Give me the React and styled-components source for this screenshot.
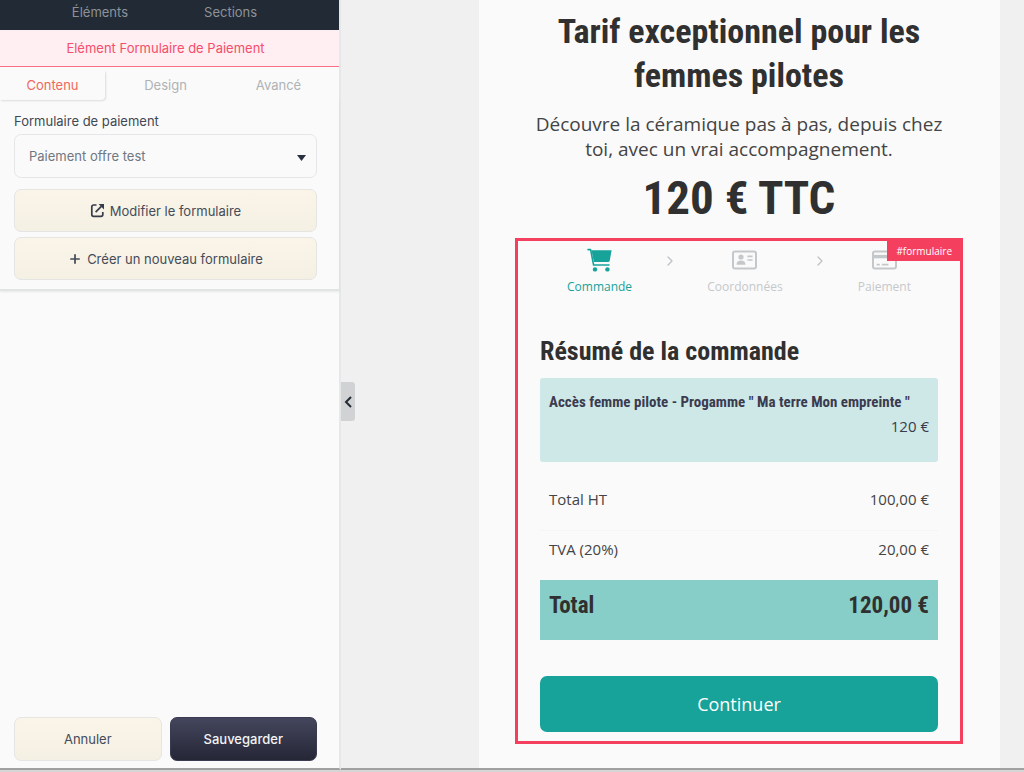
import React, { useState } from "react";
import styled, { createGlobalStyle } from "styled-components";
import { ChevronRight, Plus } from "lucide-react";

const GlobalStyle = createGlobalStyle`
  * {
    box-sizing: border-box;
  }
  body {
    margin: 0;
    background: #f0f0f0;
    font-family: Inter, sans-serif;
    font-size: 13px;
  }
  button, select {
    font-family: inherit;
    font-size: inherit;
  }
`

const titleFont = '"Liberation Sans Narrow", "Roboto Condensed", "Liberation Sans", sans-serif'

const EditorContainer = styled.div`
  display: flex;
  min-height: 100vh;
  border-bottom: 2px solid #d6d6d6;
`
const Sidebar = styled.aside`
  display: flex;
  flex-direction: column;
  flex: 0 0 341px;
  background: #fafafa;
  border-right: 2px solid #e5e8e8;
  border-bottom: 2px solid #a0a0a0;
`
const TopNav = styled.nav`
  display: flex;
  justify-content: center;
  gap: 76px;
  height: 30px;
  padding: 0 10px 6px 0;
  background: #222b35;
`
const TopLink = styled.a`
  color: #8d9299;
  line-height: 24px;
  text-decoration: none;
`
const Banner = styled.h1`
  margin: 0;
  padding-right: 8px;
  background: #ffeff2;
  border-bottom: 1px solid #fb6f88;
  color: #f64d6b;
  font-size: 13px;
  font-weight: 400;
  line-height: 36px;
  text-align: center;
`
const Tabs = styled.div`
  display: flex;
  gap: 8px;
  padding: 4px 8px 0 0;
`
const Tab = styled.button`
  flex: 1;
  height: 29px;
  padding: 0 0 2px;
  border: 0;
  border-radius: 0 0 4px 0;
  background: transparent;
  color: ${props => props.$active ? "#f0685c" : "#afb2b5"};
  box-shadow: ${props => props.$active ? "1px 1px 2px rgba(0, 0, 0, 0.12)" : "none"};
`
const Settings = styled.section`
  display: flex;
  flex-direction: column;
  padding: 11px 22px 9px 14px;
  border-bottom: 2px solid #e2e3e3;
  box-shadow: 0 1px 2px rgba(0, 0, 0, 0.08);
`
const FieldLabel = styled.label`
  color: #3f4853;
  line-height: 20px;
`
const SelectWrapper = styled.div`
  position: relative;
  margin: 3px 0 11px;
`
const Select = styled.select`
  width: 100%;
  height: 44px;
  padding: 0 14px;
  appearance: none;
  border: 1px solid #e4e6e7;
  border-radius: 7px;
  background: #fafafa;
  color: #6f7780;
`
const Caret = styled.svg`
  position: absolute;
  top: 21px;
  right: 11px;
  pointer-events: none;
`
const Button = styled.button`
  display: flex;
  flex: 1;
  align-items: center;
  justify-content: center;
  gap: 5px;
  min-height: ${props => props.$tall ? "44px" : "43px"};
  padding: 0;
  border: 1px solid ${props => props.$dark ? "#3a3b50" : "#e5e5e3"};
  border-radius: 7px;
  background: ${props => props.$dark ? "linear-gradient(#44465d, #252636)" : "linear-gradient(#faf5e8, #f4f0e3)"};
  color: ${props => props.$dark ? "#f3f3f5" : "#454b58"};
  font-weight: ${props => props.$dark ? 500 : 400};
`
const ButtonList = styled.div`
  display: flex;
  flex-direction: column;
  gap: 5px;
`
const Actions = styled.div`
  display: flex;
  gap: 8px;
  margin-top: auto;
  padding: 0 22px 7px 14px;
`
const Canvas = styled.main`
  position: relative;
  flex: 1;
  padding: 0 24px 0 138px;
  border-bottom: 2px solid #a0a0a0;
`
const Collapse = styled.button`
  position: absolute;
  top: 382px;
  left: 0;
  display: flex;
  align-items: center;
  justify-content: center;
  width: 14px;
  height: 39px;
  padding: 0;
  border: 0;
  border-radius: 0 3px 3px 0;
  background: #d0d2d3;
  color: #222b35;
`
const Page = styled.div`
  min-height: 100%;
  padding: 9px 37px 0 36px;
  background: #fafafa;
  color: #303030;
  font-family: "Open Sans", sans-serif;
  text-align: center;
`
const PageTitle = styled.h2`
  margin: 0;
  font-family: ${titleFont};
  font-size: 34px;
  line-height: 44px;
`
const Subtitle = styled.p`
  margin: 15px 0 0;
  padding: 0 16px;
  color: #444;
  font-size: 19px;
  line-height: 25px;
`
const Price = styled.p`
  margin: 0;
  padding-bottom: 4px;
  font-family: ${titleFont};
  font-size: 47px;
  font-weight: 700;
  line-height: 72px;
`
const FormBox = styled.form`
  position: relative;
  padding: 7px 22px 9px;
  border: 3px solid #f53f5f;
  text-align: left;
`
const Badge = styled.span`
  position: absolute;
  top: -1px;
  right: -1px;
  padding: 1px 9px 0;
  background: #f53f5f;
  color: #fff;
  font-size: 10px;
  font-weight: 500;
  line-height: 20px;
`
const Steps = styled.ol`
  display: flex;
  align-items: flex-start;
  justify-content: space-between;
  margin: 0;
  padding: 0 27px;
  list-style: none;
`
const Step = styled.li`
  display: flex;
  flex-direction: column;
  align-items: center;
  gap: 2px;
  color: ${props => props.$active ? "#17a29a" : "#c5c8cb"};
  font-size: 12px;
  line-height: 26px;
`
const StepArrow = styled.li`
  display: flex;
  align-items: center;
  height: 26px;
  color: #c0c3c6;
`
const SummaryTitle = styled.h3`
  margin: 33px 0 9px;
  font-family: ${titleFont};
  font-size: 26px;
  line-height: 36px;
`
const Product = styled.div`
  height: 84px;
  padding: 12px 9px;
  border-radius: 3px;
  background: #cde8e6;
  color: #3b3b50;
  line-height: 24px;
`
const ProductName = styled.div`
  font-family: ${titleFont};
  font-size: 15px;
  font-weight: 700;
`
const ProductPrice = styled.div`
  font-size: 15px;
  text-align: right;
`
const Totals = styled.table`
  width: 100%;
  margin: 18px 0 36px;
  border-collapse: collapse;
  font-size: 15px;

  th, td {
    height: 50px;
    padding: 0 9px 12px;
    font-weight: 400;
    text-align: left;
  }
  td {
    text-align: right;
  }
`
const TotalRow = styled.tr`
  border-top: ${props => props.$divided ? "1px solid #f5f5f5" : "0"};
  color: #444;
`
const GrandTotal = styled.tr`
  background: #87cec8;
  font-family: ${titleFont};
  font-size: 23px;

  th, td {
    height: 60px;
    padding-bottom: 9px;
    font-weight: 700;
  }
`
const Submit = styled.button`
  display: block;
  width: 100%;
  height: 56px;
  border: 0;
  border-radius: 7px;
  background: #17a29a;
  color: #fff;
  font-size: 18px;
`

const EditIcon = () => (
  <svg width="15" height="15" viewBox="0 0 15 15" fill="none" stroke="#363c49" strokeWidth="1.7" aria-hidden="true">
    <path d="M6.5 2H3.6A1.8 1.8 0 0 0 1.8 3.8V11.6A1.8 1.8 0 0 0 3.6 13.4H11A1.8 1.8 0 0 0 12.8 11.6V9" />
    <path d="M5.6 9.2L11.6 3.2" />
    <path d="M8.6 1H14V6.4Z" fill="#363c49" stroke="none" />
  </svg>
)

const CartIcon = () => (
  <svg width="25" height="24" viewBox="0 0 25 24" fill="currentColor" aria-hidden="true">
    <path d="M4.4 2.2H24.6L22.8 12.4A2 2 0 0 1 20.9 14H7Z" />
    <path d="M1 1.6H3.6L6.6 17H22" fill="none" stroke="currentColor" strokeWidth="1.6" strokeLinecap="round" strokeLinejoin="round" />
    <circle cx="8" cy="21.4" r="2.2" />
    <circle cx="20.4" cy="21.4" r="2.2" />
  </svg>
)

const ContactIcon = () => (
  <svg width="25" height="24" viewBox="0 0 25 24" fill="currentColor" aria-hidden="true">
    <rect x="1" y="3.5" width="23" height="17" rx="2" fill="none" stroke="currentColor" strokeWidth="2" />
    <circle cx="9" cy="9" r="2.6" />
    <path d="M4.5 16.8C4.5 14 6.4 12.6 9 12.6S13.5 14 13.5 16.8Z" />
    <path d="M15.4 8.4H20.6M15.4 12H20.6" stroke="currentColor" strokeWidth="1.6" />
  </svg>
)

const CardIcon = () => (
  <svg width="25" height="24" viewBox="0 0 25 24" fill="none" stroke="currentColor" aria-hidden="true">
    <rect x="1" y="3.5" width="23" height="17" rx="2" strokeWidth="2" />
    <path d="M1 8.6H24" strokeWidth="3.4" />
    <path d="M4.6 16.6H7.8M9.8 16.6H16.4" strokeWidth="1.6" />
  </svg>
)

const totals = [
  { label: 'Total HT', amount: '100,00 €' },
  { label: 'TVA (20%)', amount: '20,00 €' }
]

const App = () => {
  const [tab, setTab] = useState('Contenu')

  return (
    <EditorContainer>
      <GlobalStyle />
      <Sidebar>
        <TopNav>
          <TopLink href="#elements">Éléments</TopLink>
          <TopLink href="#sections">Sections</TopLink>
        </TopNav>
        <Banner>Elément Formulaire de Paiement</Banner>
        <Tabs>
          {['Contenu', 'Design', 'Avancé'].map(name => (
            <Tab key={name} type="button" $active={tab === name} onClick={() => setTab(name)}>{name}</Tab>
          ))}
        </Tabs>
        <Settings>
          <FieldLabel htmlFor="payment-form">Formulaire de paiement</FieldLabel>
          <SelectWrapper>
            <Select id="payment-form">
              <option>Paiement offre test</option>
            </Select>
            <Caret width="9" height="6" viewBox="0 0 9 6" aria-hidden="true">
              <path d="M0 0H9L4.5 6Z" fill="#2b3040" />
            </Caret>
          </SelectWrapper>
          <ButtonList>
            <Button type="button"><EditIcon />Modifier le formulaire</Button>
            <Button type="button"><Plus size={14} strokeWidth={3} />Créer un nouveau formulaire</Button>
          </ButtonList>
        </Settings>
        <Actions>
          <Button type="button" $tall>Annuler</Button>
          <Button type="button" $tall $dark>Sauvegarder</Button>
        </Actions>
      </Sidebar>
      <Canvas>
        <Collapse type="button" aria-label="Réduire">
          <svg width="10" height="14" viewBox="0 0 10 14" fill="none" stroke="currentColor" strokeWidth="2" aria-hidden="true">
            <path d="M8 2L3 7L8 12" />
          </svg>
        </Collapse>
        <Page>
          <PageTitle>Tarif exceptionnel pour les femmes pilotes</PageTitle>
          <Subtitle>Découvre la céramique pas à pas, depuis chez toi, avec un vrai accompagnement.</Subtitle>
          <Price>120 € TTC</Price>
          <FormBox onSubmit={e => e.preventDefault()}>
            <Steps>
              <Step $active><CartIcon />Commande</Step>
              <StepArrow><ChevronRight size={16} /></StepArrow>
              <Step><ContactIcon />Coordonnées</Step>
              <StepArrow><ChevronRight size={16} /></StepArrow>
              <Step><CardIcon />Paiement</Step>
            </Steps>
            <Badge>#formulaire</Badge>
            <SummaryTitle>Résumé de la commande</SummaryTitle>
            <Product>
              <ProductName>Accès femme pilote - Progamme " Ma terre Mon empreinte "</ProductName>
              <ProductPrice>120 €</ProductPrice>
            </Product>
            <Totals>
              <tbody>
                {totals.map((row, i) => (
                  <TotalRow key={row.label} $divided={i > 0}>
                    <th scope="row">{row.label}</th>
                    <td>{row.amount}</td>
                  </TotalRow>
                ))}
                <GrandTotal>
                  <th scope="row">Total</th>
                  <td>120,00 €</td>
                </GrandTotal>
              </tbody>
            </Totals>
            <Submit type="submit">Continuer</Submit>
          </FormBox>
        </Page>
      </Canvas>
    </EditorContainer>
  )
}

export default App
